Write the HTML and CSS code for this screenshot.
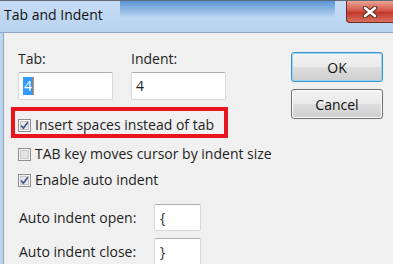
FILE: index.html
```html
<!DOCTYPE html>
<html lang="en">
<head>
  <meta charset="UTF-8" />
  <title>Tab and Indent</title>
  <link rel="stylesheet" href="styles.css">
</head>
<body>

  <div class="window">
    <div class="titlebar">
      <span class="title">Tab and Indent</span>
      <div class="close">
        <svg width="16" height="12" viewBox="0 0 16 12">
          <path d="M3 2 L13 10 M13 2 L3 10" stroke="#5a2a24" stroke-width="4.5" stroke-linecap="round"/>
          <path d="M3 2 L13 10 M13 2 L3 10" stroke="#fff" stroke-width="2.6" stroke-linecap="round"/>
        </svg>
      </div>
    </div>

    <div class="client">
      <div class="form">
        <div class="fields">
          <div class="field">
            <label>Tab:</label>
            <div class="input input-tab"><span class="sel">4</span><span class="caret"></span></div>
          </div>
          <div class="field">
            <label>Indent:</label>
            <div class="input">4</div>
          </div>
        </div>

        <div class="check first">
          <div class="highlight"></div>
          <svg class="box" width="13" height="13" viewBox="0 0 13 13">
            <rect x="0.5" y="0.5" width="12" height="12" fill="#f4f4f4" stroke="#8e8f8f"/>
            <rect x="2.5" y="2.5" width="8" height="8" fill="#e8e8e8" stroke="#c6c6c6"/>
            <path d="M3.2 6.4 L5.4 9.2 L9.8 3.2" fill="none" stroke="#3d4f8c" stroke-width="1.6"/>
          </svg>
          <span>Insert spaces instead of tab</span>
        </div>

        <div class="check second">
          <svg class="box" width="13" height="13" viewBox="0 0 13 13">
            <rect x="0.5" y="0.5" width="12" height="12" fill="#f4f4f4" stroke="#8e8f8f"/>
            <rect x="2.5" y="2.5" width="8" height="8" fill="#e4e4e4" stroke="#cacaca"/>
          </svg>
          <span>TAB key moves cursor by indent size</span>
        </div>

        <div class="check third">
          <svg class="box" width="13" height="13" viewBox="0 0 13 13">
            <rect x="0.5" y="0.5" width="12" height="12" fill="#f4f4f4" stroke="#8e8f8f"/>
            <rect x="2.5" y="2.5" width="8" height="8" fill="#e8e8e8" stroke="#c6c6c6"/>
            <path d="M3.2 6.4 L5.4 9.2 L9.8 3.2" fill="none" stroke="#3d4f8c" stroke-width="1.6"/>
          </svg>
          <span>Enable auto indent</span>
        </div>

        <div class="auto">
          <div class="auto-row">
            <label>Auto indent open:</label>
            <div class="input small">{</div>
          </div>
          <div class="auto-row">
            <label>Auto indent close:</label>
            <div class="input small">}</div>
          </div>
        </div>
      </div>

      <div class="buttons">
        <button class="btn default">OK</button>
        <button class="btn">Cancel</button>
      </div>
    </div>
  </div>

</body>
</html>
```

FILE: styles.css
```css
body {
  margin: 0;
  width: 393px;
  height: 264px;
  overflow: hidden;
  font-family: 'Open Sans', 'Noto Sans', sans-serif;
  font-size: 14px;
  color: #1e1e1e;
  background: #f0f0f0;
}

.window {
  width: 393px;
  height: 264px;
  overflow: hidden;
  background: #bcd5ef;
}

.titlebar {
  height: 31px;
  display: flex;
  align-items: flex-start;
  background:
    linear-gradient(to bottom, rgba(60, 130, 205, 0.8) 0%, rgba(60, 130, 205, 0) 55%) 120px 0 / 215px 100% no-repeat,
    linear-gradient(to bottom, #c6ddf5, #b9d3ef);
  border-top: 1px solid #5d6a78;
  border-bottom: 1px solid #8fa6c0;
}

.title {
  font-size: 14px;
  color: #111;
  padding: 4px 0 0 4px;
}

.close {
  margin-left: auto;
  width: 46px;
  height: 21px;
  border-radius: 0 0 0 4px;
  border: 1px solid #6b2a22;
  border-top: none;
  border-right: none;
  background: linear-gradient(to bottom, #e8a596 0%, #d2584a 45%, #c0392b 55%, #d9715f 100%);
  display: flex;
  align-items: center;
  justify-content: center;
}

.client {
  display: flex;
  height: 232px;
  margin-left: 3px;
  border-left: 1px solid #8fa6c0;
  background: #f0f0f0;
}

.form {
  width: 270px;
  flex: none;
  padding: 18px 0 0 14px;
}

.fields {
  display: flex;
  gap: 18px;
}

.field label {
  display: block;
  height: 16px;
  line-height: 16px;
  margin-bottom: 5px;
}

.input {
  box-sizing: border-box;
  width: 95px;
  height: 28px;
  background: #fff;
  border: 1px solid #d5d9de;
  border-top-color: #abadb3;
  border-radius: 2px;
  padding: 4px 0 0 4px;
  line-height: 18px;
  font-size: 14px;
  display: flex;
  align-items: flex-start;
}

.input-tab .sel {
  background: #3399ff;
  color: #fff;
  padding: 0 1px;
}

.input-tab .caret {
  width: 1px;
  height: 18px;
  background: #e08a2c;
}

.check {
  position: relative;
  display: flex;
  align-items: center;
  gap: 4px;
  height: 14px;
  line-height: 14px;
  white-space: nowrap;
}

.check .box {
  flex: none;
}

.check.first {
  margin-top: 18px;
}

.check.second {
  margin-top: 15px;
}

.check.third {
  margin-top: 12px;
}

.highlight {
  position: absolute;
  left: -7px;
  top: -11px;
  width: 209px;
  height: 23px;
  border: 4px solid #e8151d;
}

.auto {
  margin-top: 17px;
  display: flex;
  flex-direction: column;
  gap: 7px;
}

.auto-row {
  display: flex;
  align-items: center;
}

.auto-row label {
  width: 135px;
  padding-left: 1px;
  white-space: nowrap;
}

.input.small {
  width: 47px;
  height: 27px;
  padding: 4px 0 0 5px;
  color: #333;
}

.buttons {
  display: flex;
  flex-direction: column;
  gap: 7px;
  padding-top: 19px;
  margin-left: 3px;
}

.btn {
  width: 92px;
  height: 30px;
  font-family: inherit;
  font-size: 14px;
  color: #111;
  border: 1px solid #707070;
  border-radius: 3px;
  background: linear-gradient(to bottom, #f2f2f2 0%, #ebebeb 48%, #dddddd 52%, #cfcfcf 100%);
  box-shadow: inset 0 0 0 1px #fcfcfc;
}

.btn.default {
  border-color: #3c93c9;
  box-shadow: inset 0 0 0 1px #95d6f5;
}
```
